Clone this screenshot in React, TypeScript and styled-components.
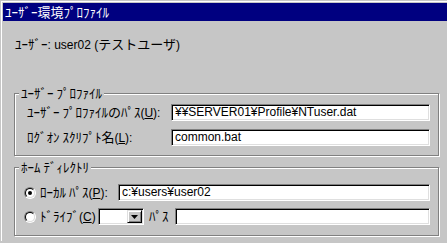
import React from 'react'
import styled, { createGlobalStyle } from 'styled-components'

const GlobalStyle = createGlobalStyle`
  html, body {
    margin: 0;
    padding: 0;
    background: #c6c6c6;
  }
  body {
    font-family: "Liberation Sans", "Noto Sans CJK JP", sans-serif;
    font-size: 12px;
    color: #000;
  }
`

const Window = styled.div`
  margin: 1px 0 0 1px;
  border-top: 1px solid #ffffff;
  border-left: 1px solid #ffffff;
  padding: 1px 0 0 1px;
  height: 240px;
  box-sizing: border-box;
  overflow: hidden;
`

const TitleBar = styled.div`
  height: 18px;
  background: #000080;
  color: #ffffff;
  padding-left: 2px;
  line-height: 18px;
  white-space: nowrap;
`

// Japanese runs are set a touch larger, like the bitmap UI font
const Jp = styled.span`
  font-family: "Noto Sans CJK JP", sans-serif;
  font-size: 13px;
`

const Content = styled.div`
  padding: 16px 0 0 11px;
`

const UserLine = styled.div`
  padding-left: 1px;
  line-height: 14px;
  height: 14px;
  white-space: nowrap;
`

const Group = styled.div<{ $top: number; $pad: string }>`
  position: relative;
  box-sizing: border-box;
  width: 425px;
  margin-top: ${(p) => p.$top}px;
  padding: ${(p) => p.$pad};
  border: 1px solid #808080;
  box-shadow: 1px 1px 0 #ffffff, inset 1px 1px 0 #ffffff;
`

const Legend = styled.div`
  position: absolute;
  top: -8px;
  left: 4px;
  padding: 0 2px;
  height: 14px;
  line-height: 14px;
  background: #c6c6c6;
  white-space: nowrap;
`

const FieldGrid = styled.div`
  display: grid;
  grid-template-columns: 144px 1fr;
  grid-auto-rows: 17px;
  row-gap: 8px;
  align-items: center;
`

const Label = styled.span<{ $w?: number }>`
  display: inline-block;
  width: ${(p) => (p.$w ? `${p.$w}px` : 'auto')};
  flex: none;
  white-space: nowrap;
  line-height: 14px;
`

const Key = styled.span`
  text-decoration: underline;
  text-underline-offset: 1px;
`

const Field = styled.div`
  box-sizing: border-box;
  height: 17px;
  flex: 1;
  min-width: 0;
  background: #ffffff;
  border: 1px solid;
  border-color: #808080 #ffffff #ffffff #808080;
  box-shadow: inset 1px 1px 0 #000000, inset -1px -1px 0 #dfdfdf;
  padding: 0 0 0 3px;
  line-height: 15px;
  white-space: nowrap;
  overflow: hidden;
`

const Rows = styled.div`
  display: flex;
  flex-direction: column;
  gap: 7px;
`

const Row = styled.div`
  display: flex;
  align-items: center;
  height: 17px;
`

const RadioOuter = styled.span`
  box-sizing: border-box;
  width: 12px;
  height: 12px;
  margin-right: 4px;
  flex: none;
  border-radius: 50%;
  border: 1px solid;
  border-color: #808080 #ffffff #ffffff #808080;
  display: flex;
  align-items: center;
  justify-content: center;
`

const RadioInner = styled.span<{ $on?: boolean }>`
  box-sizing: border-box;
  width: 10px;
  height: 10px;
  border-radius: 50%;
  border: 1px solid;
  border-color: #000000 #dfdfdf #dfdfdf #000000;
  background: #ffffff;
  display: flex;
  align-items: center;
  justify-content: center;

  &::after {
    content: '';
    width: 4px;
    height: 4px;
    border-radius: 50%;
    background: ${(p) => (p.$on ? '#000000' : 'transparent')};
  }
`

const Combo = styled.div`
  box-sizing: border-box;
  width: 46px;
  height: 17px;
  flex: none;
  background: #ffffff;
  border: 1px solid;
  border-color: #808080 #ffffff #ffffff #808080;
  box-shadow: inset 1px 1px 0 #000000, inset -1px -1px 0 #dfdfdf;
  display: flex;
  justify-content: flex-end;
  padding: 1px;
`

const DropButton = styled.div`
  box-sizing: border-box;
  width: 15px;
  height: 13px;
  background: #c6c6c6;
  border: 1px solid;
  border-color: #dfdfdf #000000 #000000 #dfdfdf;
  box-shadow: inset 1px 1px 0 #ffffff, inset -1px -1px 0 #808080;
  display: flex;
  align-items: center;
  justify-content: center;
`

const Spacer = styled.span`
  width: 5px;
  flex: none;
`

const Radio = ({ on }: { on?: boolean }) => (
  <RadioOuter>
    <RadioInner $on={on} />
  </RadioOuter>
)

export default function App() {
  return (
    <>
      <GlobalStyle />
      <Window>
        <TitleBar>
          <Jp>ﾕｰｻﾞｰ環境ﾌﾟﾛﾌｧｲﾙ</Jp>
        </TitleBar>
        <Content>
          <UserLine>
            <Jp>ﾕｰｻﾞｰ</Jp>: user02 (<Jp>テストユーザ</Jp>)
          </UserLine>

          <Group $top={42} $pad="10px 8px 9px 12px">
            <Legend>
              <Jp>ﾕｰｻﾞｰ ﾌﾟﾛﾌｧｲﾙ</Jp>
            </Legend>
            <FieldGrid>
              <Label>
                <Jp>ﾕｰｻﾞｰ ﾌﾟﾛﾌｧｲﾙのﾊﾟｽ</Jp>(<Key>U</Key>):
              </Label>
              <Field>¥¥SERVER01¥Profile¥NTuser.dat</Field>
              <Label>
                <Jp>ﾛｸﾞｵﾝ ｽｸﾘﾌﾟﾄ名</Jp>(<Key>L</Key>):
              </Label>
              <Field>common.bat</Field>
            </FieldGrid>
          </Group>

          <Group $top={11} $pad="16px 8px 10px 9px">
            <Legend>
              <Jp>ﾎｰﾑ ﾃﾞｨﾚｸﾄﾘ</Jp>
            </Legend>
            <Rows>
              <Row>
                <Radio on />
                <Label $w={78}>
                  <Jp>ﾛｰｶﾙ ﾊﾟｽ</Jp>(<Key>P</Key>):
                </Label>
                <Field>c:¥users¥user02</Field>
              </Row>
              <Row>
                <Radio />
                <Label $w={58}>
                  <Jp>ﾄﾞﾗｲﾌﾞ</Jp>(<Key>C</Key>)
                </Label>
                <Combo>
                  <DropButton>
                    <svg width="7" height="4" viewBox="0 0 7 4">
                      <path d="M0 0h7L3.5 4z" fill="#000" />
                    </svg>
                  </DropButton>
                </Combo>
                <Spacer />
                <Label $w={26}>
                  <Jp>ﾊﾟｽ</Jp>
                </Label>
                <Field />
              </Row>
            </Rows>
          </Group>
        </Content>
      </Window>
    </>
  )
}
